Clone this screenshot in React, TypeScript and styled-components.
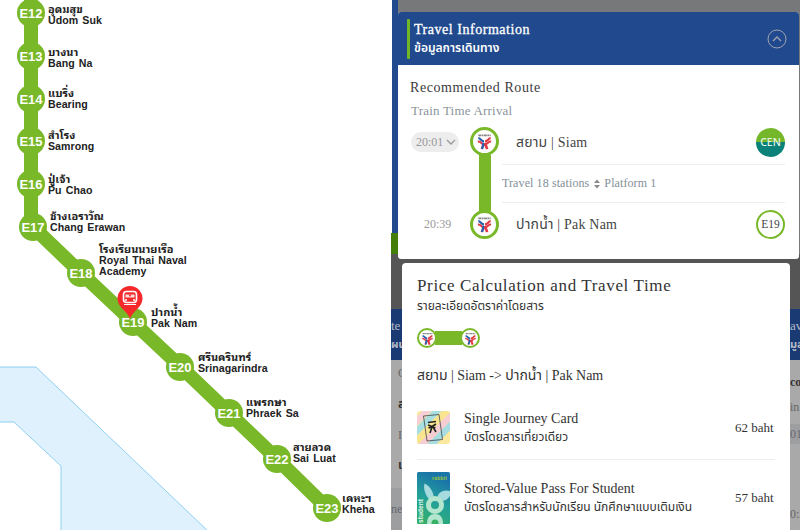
import React, { FC } from 'react'
import styled, { createGlobalStyle, css } from 'styled-components'

const green = '#79b829'
const navy = '#214a8e'
const serif = "'Liberation Serif', 'Noto Sans Thai', 'Noto Sans', serif"
const thai = "'Noto Sans Thai', 'Noto Sans', 'Open Sans', sans-serif"
const thaiLooped = "'Noto Sans Thai Looped', 'Noto Looped Thai', Loma, 'Noto Sans Thai', 'Noto Sans', sans-serif"

type Station = {
  code: string
  x: number
  y: number
  labelX: number
  labelY: number
  th: string
  en: string[]
}

const stations: Station[] = [
  { code: 'E12', x: 31, y: 13, labelX: 48, labelY: 1, th: 'อุดมสุข', en: ['Udom Suk'] },
  { code: 'E13', x: 31, y: 56, labelX: 48, labelY: 44, th: 'บางนา', en: ['Bang Na'] },
  { code: 'E14', x: 31, y: 99, labelX: 48, labelY: 85, th: 'แบริ่ง', en: ['Bearing'] },
  { code: 'E15', x: 31, y: 141, labelX: 48, labelY: 127, th: 'สำโรง', en: ['Samrong'] },
  { code: 'E16', x: 31, y: 184, labelX: 48, labelY: 171, th: 'ปู่เจ้า', en: ['Pu Chao'] },
  { code: 'E17', x: 33, y: 227, labelX: 50, labelY: 208, th: 'ช้างเอราวัณ', en: ['Chang Erawan'] },
  { code: 'E18', x: 81, y: 273, labelX: 99, labelY: 241, th: 'โรงเรียนนายเรือ', en: ['Royal Thai Naval', 'Academy'] },
  { code: 'E19', x: 133, y: 322, labelX: 151, labelY: 304, th: 'ปากน้ำ', en: ['Pak Nam'] },
  { code: 'E20', x: 180, y: 367, labelX: 198, labelY: 349, th: 'ศรีนครินทร์', en: ['Srinagarindra'] },
  { code: 'E21', x: 229, y: 413, labelX: 246, labelY: 394, th: 'แพรกษา', en: ['Phraek Sa'] },
  { code: 'E22', x: 277, y: 459, labelX: 293, labelY: 439, th: 'สายลวด', en: ['Sai Luat'] },
  { code: 'E23', x: 327, y: 508, labelX: 342, labelY: 490, th: 'เคหะฯ', en: ['Kheha'] },
]

const BtsLogo: FC<{ size: number }> = ({ size }) => (
  <svg width={size} height={size} viewBox="0 0 20 20" fill="none">
    <path d="M3.500 3.500h13" stroke="#888" strokeWidth="1.800" strokeDasharray="3 .5 2 .5" />
    <path d="M3.500 6.500C6 6.500 6.500 10 9.500 10" stroke="#2761ad" strokeWidth="2.400" />
    <path d="M16.500 6.500C14 6.500 13.500 10 10.500 10" stroke="#e23a43" strokeWidth="2.400" />
    <path d="M3 10C6 9.500 7 13 9 13S7.500 15 7 18" stroke="#e23a43" strokeWidth="2.200" />
    <path d="M17 10C14 9.500 13 13 11 13S12.500 15 13 18" stroke="#e23a43" strokeWidth="2.200" />
    <path d="M9 11.500L7.500 18" stroke="#2761ad" strokeWidth="2.400" />
    <path d="M11 11.500L12.500 18" stroke="#e23a43" strokeWidth="2.400" />
  </svg>
)

const RouteMap: FC = () => (
  <MapCanvas>
    <MapDrawing width="391" height="530" viewBox="0 0 391 530">
      <path d="M-2 367H36L209 532H61V466L14 422H-2Z" fill="#dff1fc" stroke="#8fd0f2" />
      <path
        d="M31 -4V225L81 273L133 322L181 367L229 413L277 459L327 508"
        fill="none"
        stroke={green}
        strokeWidth="14"
        strokeLinejoin="round"
      />
    </MapDrawing>
    {stations.map(({ code, x, y, labelX, labelY, th, en }) => (
      <React.Fragment key={code}>
        <StationDot $x={x} $y={y}>
          {code}
        </StationDot>
        <StationLabel $x={labelX} $y={labelY}>
          <StationThai>{th}</StationThai>
          {en.map((line) => (
            <StationName key={line}>{line}</StationName>
          ))}
        </StationLabel>
      </React.Fragment>
    ))}
    <Pin width="26" height="34" viewBox="0 0 26 34">
      <path
        d="M13 33C11 25 .5 22 .5 12.500a12.500 12.500 0 0 1 25 0C25.500 22 15 25 13 33Z"
        fill="#f5282c"
      />
      <rect x="6.500" y="5.500" width="13" height="11" rx="3" fill="none" stroke="#fff" strokeWidth="1.600" />
      <path d="M8.500 8.500h9v3h-9Z" fill="#fff" opacity=".85" />
      <path d="M11.500 8.500h3L13 11Z" fill="#f5282c" />
      <path d="M8 14h2M16 14h2" stroke="#fff" strokeWidth="1.500" />
      <path d="M7 18.500h12" stroke="#fff" />
    </Pin>
  </MapCanvas>
)

const TravelInformation: FC = () => (
  <TravelCard>
    <TravelHeader>
      <Accent />
      <HeaderTitles>
        <HeaderTitle>Travel Information</HeaderTitle>
        <HeaderThai>ข้อมูลการเดินทาง</HeaderThai>
      </HeaderTitles>
      <svg width="20" height="20" viewBox="0 0 20 20" fill="none" stroke="#a0a4b4">
        <circle cx="10" cy="10" r="9" />
        <path d="M6 12l4-4 4 4" strokeWidth="1.300" />
      </svg>
    </TravelHeader>
    <TravelBody>
      <RouteTitle>Recommended Route</RouteTitle>
      <RouteSubtitle>Train Time Arrival</RouteSubtitle>
      <Route>
        <Times>
          <TimePill>
            20:01
            <svg width="10" height="8" viewBox="0 0 10 8" fill="none" stroke="#999" strokeWidth="1.300">
              <path d="M1 2l4 4 4-4" />
            </svg>
          </TimePill>
          <Time>20:39</Time>
        </Times>
        <Track>
          <TrackStop $size={29}>
            <BtsLogo size={19} />
          </TrackStop>
          <TrackBar />
          <TrackStop $size={29}>
            <BtsLogo size={19} />
          </TrackStop>
        </Track>
        <Stops>
          <Stop>
            <StopName>
              <ThaiName>สยาม</ThaiName> | Siam
            </StopName>
            <CenBadge>CEN</CenBadge>
          </Stop>
          <Travel>
            Travel 18 stations
            <svg width="6" height="10" viewBox="0 0 6 10" fill="#888">
              <path d="M0 4L3 .5 6 4ZM0 6l3 3.500L6 6Z" />
            </svg>
            Platform 1
          </Travel>
          <Stop>
            <StopName>
              <ThaiName>ปากน้ำ</ThaiName> | Pak Nam
            </StopName>
            <CodeBadge>E19</CodeBadge>
          </Stop>
        </Stops>
      </Route>
    </TravelBody>
  </TravelCard>
)

const JourneyCard: FC = () => (
  <svg width="33" height="33" viewBox="0 0 33 33">
    <clipPath id="journey">
      <rect width="33" height="33" rx="3" />
    </clipPath>
    <g clipPath="url(#journey)" strokeWidth="6.500">
      <rect width="33" height="33" fill="#fbe9a0" />
      <path d="M-4 14L14 -4" stroke="#f6cfd6" />
      <path d="M-4 24L24 -4" stroke="#a8dfe0" />
      <path d="M-4 34L34 -4" stroke="#f9e58f" />
      <path d="M-1 40L40 -1" stroke="#f6cdd2" />
      <path d="M9 39L39 9" stroke="#a6dde2" />
    </g>
    <path d="M6.500 5L22 3.500l3.500 25L10 30Z" fill="none" stroke="#444" strokeWidth=".8" />
    <path
      d="M11 11.500l8-1M11 14l4 1.500 4-2.500M11.500 17l3-1 4 .5M15 16l-2 6M16 16l3 5"
      stroke="#222"
      strokeWidth="1.600"
      fill="none"
    />
  </svg>
)

const StudentCard: FC = () => (
  <svg width="33" height="52" viewBox="0 0 33 52">
    <defs>
      <linearGradient id="student" x1="0.300" y1="0" x2="0" y2="1">
        <stop offset="0" stopColor="#1b75a8" />
        <stop offset=".45" stopColor="#22a09a" />
        <stop offset="1" stopColor="#35b163" />
      </linearGradient>
    </defs>
    <rect width="33" height="52" rx="1.500" fill="url(#student)" />
    <path d="M7.500 11.500c5 2 9 8 9.500 15l-4 1.500C9 24 6 18 7.500 11.500Z" fill="#a5dade" />
    <path d="M33 19c-6-2-12 1-13 7l4 3c4 0 7-2 9-5Z" fill="#a5dade" />
    <circle cx="18" cy="33" r="6.500" fill="none" stroke="#b4e5cf" strokeWidth="5" />
    <path d="M10 52c0-7 3-10 8-10s8 3 8 10Z" fill="#b4e5cf" />
    <circle cx="18" cy="51" r="3.500" fill="#35b163" />
    <text x="15" y="8" fontFamily="Liberation Sans" fontWeight="bold" fontSize="5" fill="#9dc83a" textLength="15">
      rabbit
    </text>
    <text
      transform="translate(6 51) rotate(-90)"
      fontFamily="Liberation Sans"
      fontWeight="bold"
      fontSize="6.500"
      fill="#e5f7ee"
      textLength="24"
    >
      student
    </text>
  </svg>
)

const PriceCalculation: FC = () => (
  <PriceCard>
    <PriceTitle>Price Calculation and Travel Time</PriceTitle>
    <PriceThai>รายละเอียดอัตราค่าโดยสาร</PriceThai>
    <MiniTrack>
      <TrackStop $size={20}>
        <BtsLogo size={15} />
      </TrackStop>
      <MiniBar />
      <TrackStop $size={20}>
        <BtsLogo size={15} />
      </TrackStop>
    </MiniTrack>
    <Trip>
      <ThaiName>สยาม</ThaiName> | Siam -&gt; <ThaiName>ปากน้ำ</ThaiName> | Pak Nam
    </Trip>
    <Fare $height={63}>
      <JourneyCard />
      <FareText>
        <span>Single Journey Card</span>
        <FareThai>บัตรโดยสารเที่ยวเดียว</FareThai>
      </FareText>
      <Price>62 baht</Price>
    </Fare>
    <Fare $height={76}>
      <StudentCard />
      <FareText>
        <span>Stored-Value Pass For Student</span>
        <FareThai>บัตรโดยสารสำหรับนักเรียน นักศึกษาแบบเติมเงิน</FareThai>
      </FareText>
      <Price>57 baht</Price>
    </Fare>
  </PriceCard>
)

const App: FC = () => (
  <>
    <GlobalStyle />
    <Page>
      <RouteMap />
      <Panel>
        <Backdrop>
          <NavyEdge />
          <GreenEdge />
          <DimGap />
          <DimHeader>
            <DimSide>
              <span>te</span>
              <b>ผน</b>
            </DimSide>
            <DimSide>
              <span>av</span>
              <b>มูล</b>
            </DimSide>
          </DimHeader>
          <DimBody>
            <DimLeft>
              <i>C</i>
              <b>ส</b>
              <i>I</i>
              <b>เ</b>
              <DimBand $height={42}>ner</DimBand>
            </DimLeft>
            <DimRight>
              <b>co</b>
              <i>in</i>
              <DimBand $height={20}>01</DimBand>
              <i>0:3</i>
            </DimRight>
          </DimBody>
        </Backdrop>
        <Cards>
          <TravelInformation />
          <PriceCalculation />
        </Cards>
      </Panel>
    </Page>
  </>
)

export default App

const GlobalStyle = createGlobalStyle`
  body {
    margin: 0;
    background: #fff;
  }
  svg {
    display: block;
    flex-shrink: 0;
  }
`
const Page = styled.div`
  display: grid;
  grid-template-columns: 391px 409px;
  width: 800px;
  height: 530px;
  overflow: hidden;
`

const MapCanvas = styled.section`
  position: relative;
  overflow: hidden;
`
const MapDrawing = styled.svg`
  position: absolute;
  inset: 0;
`
const mapPoint = css<{ $x: number; $y: number }>`
  position: absolute;
  left: ${({ $x }) => $x}px;
  top: ${({ $y }) => $y}px;
`
const StationDot = styled.div<{ $x: number; $y: number }>`
  ${mapPoint}
  display: flex;
  align-items: center;
  justify-content: center;
  width: 28px;
  height: 28px;
  margin: -14px;
  border-radius: 50%;
  background: ${green};
  color: #fff;
  font: bold 13px 'Liberation Sans', sans-serif;
`
const StationLabel = styled.div<{ $x: number; $y: number }>`
  ${mapPoint}
  display: flex;
  flex-direction: column;
  color: #222;
  white-space: nowrap;
`
/* the map lettering is an extended bold */
const StationName = styled.span`
  font: bold 10px/11px 'Liberation Sans', sans-serif;
  letter-spacing: 0.05px;
  word-spacing: 1px;
  transform: scaleX(1.06);
  transform-origin: left;
`
const StationThai = styled.span`
  height: 14px;
  font: bold 11px/14px ${thaiLooped};
`
const Pin = styled.svg`
  position: absolute;
  left: 117px;
  top: 286px;
`

const Panel = styled.section`
  position: relative;
  height: 530px;
  overflow: hidden;
  font-family: ${serif};
`
const Backdrop = styled.div`
  position: absolute;
  inset: 0;
  display: flex;
  flex-direction: column;
  background: #777879;
`
const NavyEdge = styled.div`
  width: 6px;
  height: 233px;
  border-left: 1px solid #fff;
  background: ${navy};
`
const GreenEdge = styled.div`
  width: 7px;
  height: 21px;
  background: #437f08;
`
const DimGap = styled.div`
  height: 55px;
  background: #555;
`
const DimHeader = styled.div`
  display: flex;
  justify-content: space-between;
  height: 51px;
  background: #1a3a74;
  color: #b5bac5;
`
const DimSide = styled.div`
  display: flex;
  flex-direction: column;
  width: 10px;
  padding-top: 8px;
  font-size: 13px;
  line-height: 18px;
  b {
    font-size: 11px;
  }
`
const DimBody = styled.div`
  display: flex;
  justify-content: space-between;
  flex: 1;
  background: #a9a9a9;
  color: #333;
`
const dimColumn = css`
  display: flex;
  flex-direction: column;
  font-size: 12px;
  line-height: 16px;
  i {
    color: #666;
    font-style: normal;
  }
`
const DimLeft = styled.div`
  ${dimColumn}
  justify-content: space-between;
  width: 11px;
  padding-top: 5px;
  i,
  b {
    padding-left: 7px;
  }
`
const DimRight = styled.div`
  ${dimColumn}
  width: 10px;
  gap: 9px;
  padding-top: 14px;
  i:last-child {
    margin-top: 53px;
  }
`
const DimBand = styled.div<{ $height: number }>`
  height: ${({ $height }) => $height}px;
  background: #9d9ea0;
  color: #656a70;
  line-height: ${({ $height }) => $height}px;
`
const Cards = styled.div`
  position: relative;
  display: flex;
  flex-direction: column;
  gap: 4px;
  height: 518px;
  padding: 12px 1px 0 7px;
`

const TravelCard = styled.article`
  height: 247px;
  border-radius: 3px;
  background: #fff;
  box-shadow: 0 8px 0 #555;
`
const TravelHeader = styled.header`
  display: flex;
  align-items: center;
  box-sizing: border-box;
  height: 53px;
  padding: 0 12px 0 9px;
  border-radius: 3px 3px 0 0;
  background: ${navy};
  color: #fff;
`
const Accent = styled.div`
  width: 3px;
  height: 40px;
  border-radius: 1px;
  background: #72b527;
`
const HeaderTitles = styled.div`
  display: flex;
  flex: 1;
  flex-direction: column;
  padding: 2px 0 0 4px;
`
const HeaderTitle = styled.h2`
  margin: 0;
  font-size: 14px;
  font-weight: 400;
  line-height: 18px;
  letter-spacing: 0.53px;
  -webkit-text-stroke: 0.3px;
`
const HeaderThai = styled.span`
  font: 600 12px/19px ${thai};
`
const TravelBody = styled.div`
  padding: 13px 14px 0 12px;
`
const RouteTitle = styled.h3`
  margin: 0;
  color: #3b3b3b;
  font-size: 14px;
  font-weight: 400;
  line-height: 19px;
  letter-spacing: 0.58px;
`
const RouteSubtitle = styled.div`
  margin-top: 5px;
  padding-left: 1px;
  color: #8b949a;
  font-size: 13px;
  line-height: 17px;
  letter-spacing: 0.2px;
`
const Route = styled.div`
  display: grid;
  grid-template-columns: 60px 32px 1fr;
  height: 112px;
  margin-top: 8px;
`
const Times = styled.div`
  display: flex;
  flex-direction: column;
  justify-content: space-between;
  padding: 5px 0 6px 1px;
  color: #999;
  font-size: 12px;
`
const TimePill = styled.div`
  display: flex;
  align-items: center;
  gap: 3px;
  box-sizing: border-box;
  width: 48px;
  height: 20px;
  padding-left: 5px;
  border-radius: 10px;
  background: #ededee;
`
const Time = styled.div`
  padding-left: 13px;
  line-height: 18px;
`
const Track = styled.div`
  display: flex;
  flex-direction: column;
  align-items: center;
  justify-content: space-between;
  width: 29px;
`
const TrackStop = styled.div<{ $size: number }>`
  display: flex;
  align-items: center;
  justify-content: center;
  box-sizing: border-box;
  width: ${({ $size }) => $size}px;
  height: ${({ $size }) => $size}px;
  border: ${({ $size }) => ($size > 24 ? 3 : 2)}px solid ${green};
  border-radius: 50%;
  background: #fff;
`
const TrackBar = styled.div`
  flex: 1;
  width: 12px;
  margin: -1px 0;
  background: ${green};
`
const Stops = styled.div`
  display: flex;
  flex-direction: column;
  justify-content: space-between;
`
const Stop = styled.div`
  display: flex;
  align-items: center;
  justify-content: space-between;
  height: 30px;
  padding-left: 14px;
`
const StopName = styled.div`
  color: #444;
  font-size: 14px;
  letter-spacing: 0.2px;
`
const ThaiName = styled.span`
  font-family: ${thai};
  font-size: 14px;
`
const Travel = styled.div`
  display: flex;
  align-items: center;
  gap: 4.5px;
  box-sizing: border-box;
  height: 39px;
  margin-top: 1px;
  border: solid #eee;
  border-width: 1px 0;
  color: #84909a;
  font-size: 12px;
  letter-spacing: 0.1px;
`
const badge = css`
  display: flex;
  align-items: center;
  justify-content: center;
  box-sizing: border-box;
  width: 29px;
  height: 29px;
  border-radius: 50%;
`
const CenBadge = styled.div`
  ${badge}
  background: linear-gradient(#75b72a 50%, #0a8279 50%);
  color: #e6f5e6;
  font: 500 10.5px 'Noto Sans', sans-serif;
`
const CodeBadge = styled.div`
  ${badge}
  border: 2px solid ${green};
  color: #444;
  font-size: 11.5px;
`

const PriceCard = styled.article`
  box-sizing: border-box;
  width: 388px;
  height: 267px;
  margin-left: 4px;
  padding: 12px 15px 0;
  border-radius: 4px 4px 0 0;
  background: #fff;
  color: #333;
`
const PriceTitle = styled.h2`
  margin: 0;
  font-size: 17px;
  font-weight: 400;
  line-height: 22px;
  letter-spacing: 0.64px;
`
const PriceThai = styled.div`
  font: 12px/18px ${thai};
  color: #333;
`
const MiniTrack = styled.div`
  display: flex;
  align-items: center;
  width: 63px;
  margin-top: 13px;
`
const MiniBar = styled.div`
  flex: 1;
  height: 14px;
  margin: 0 -2px;
  background: ${green};
`
const Trip = styled.div`
  height: 22px;
  margin-top: 17px;
  font-size: 14px;
  line-height: 22px;
  letter-spacing: -0.03px;
  white-space: nowrap;
`
const Fare = styled.div<{ $height: number }>`
  display: flex;
  align-items: center;
  box-sizing: border-box;
  height: ${({ $height }) => $height}px;
  margin-top: 9px;
  & + & {
    margin-top: 0;
    border-top: 1px solid #eee;
  }
`
const FareText = styled.div`
  display: flex;
  flex: 1;
  flex-direction: column;
  padding-left: 14px;
  font-size: 14px;
  line-height: 18px;
  white-space: nowrap;
`
const FareThai = styled.span`
  font: 12px/18px ${thai};
`
const Price = styled.div`
  width: 40px;
  font-size: 13px;
  white-space: nowrap;
`
